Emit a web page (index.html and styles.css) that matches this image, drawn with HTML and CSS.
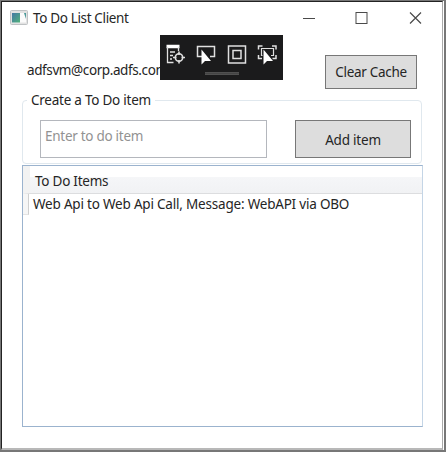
FILE: index.html
```html
<!DOCTYPE html>
<html lang="en">
<head>
<meta charset="utf-8">
<title>To Do List Client</title>
<link rel="stylesheet" href="styles.css">
</head>
<body>
<div class="frame">
<main class="window">
  <header class="titlebar">
    <svg class="app-icon" width="18" height="15" viewBox="0 0 18 15">
      <defs><linearGradient id="g" x1="0" y1="0" x2="1" y2="1"><stop offset="0" stop-color="#4478a5"/><stop offset="1" stop-color="#52b27c"/></linearGradient></defs>
      <rect x=".5" y=".5" width="17" height="14" rx="1" fill="#e2e2e2" stroke="#bfc2c4"/>
      <rect x="2" y="3" width="14" height="9.500" fill="#fbfbfb"/>
      <rect x="2" y="3" width="8" height="9.500" fill="url(#g)"/>
      <path d="M14 3h2v6z" fill="#4c9a9a"/>
    </svg>
    <h1 class="title">To Do List Client</h1>
    <svg class="controls" width="124" height="14" viewBox="0 0 124 14" fill="none" stroke="#4a4a4a">
      <path d="M0 7.500h12"/>
      <rect x="53" y="1.500" width="11" height="11"/>
      <path d="M107 1.500l11 11M118 1.500l-11 11" stroke-width="1.200"/>
    </svg>
  </header>
  <section class="account">
    <span class="user">adfsvm@corp.adfs.com</span>
    <button class="button clear">Clear Cache</button>
  </section>
  <fieldset class="group">
    <legend class="legend">Create a To Do item</legend>
    <div class="form">
      <input class="entry" placeholder="Enter to do item">
      <button class="button add">Add item</button>
    </div>
  </fieldset>
  <section class="list">
    <div class="list-head">To Do Items</div>
    <div class="row"><span class="gutter"></span>Web Api to Web Api Call, Message: WebAPI via OBO</div>
  </section>
</main>
</div>
<div class="debug-bar">
  <svg width="123" height="45" viewBox="0 0 123 45" fill="none" stroke="#e0e0e0" stroke-width="1.300">
    <path d="M6.500 11.500h13" stroke="#fff" stroke-width="3.500"/>
    <path d="M7.500 12v15.500h6M18.500 12v4M10 17h5M10 20.500h3M10 24h2"/>
    <circle cx="19" cy="22.500" r="3.700" stroke-width="1.600"/>
    <path d="M19 16.500v3.500M19 25v3.500M13 22.500h3.500M21.500 22.500H25" stroke-width="1.600"/>
    <path d="M42 21.500h-4.500v-10h17v10H50" stroke-width="1.500"/>
    <path d="M41.500 14.500v15l3.500-3.500h6z" fill="#fff" stroke="none"/>
    <rect x="68.500" y="11" width="17" height="17" stroke-width="1.500"/>
    <rect x="73" y="15.500" width="8" height="8" stroke-width="1.500"/>
    <path d="M98.500 14.500v-3.500h4M112 11h4v3.500M98.500 20v3.500h3.500M116 20v3.500h-3.500" stroke-width="1.500"/>
    <path d="M102.500 20.500h-1v-7h12v7H111" stroke-width="1.200"/>
    <path d="M103.500 14.500v15l3.500-3.500h6z" fill="#fff" stroke="none"/>
    <path d="M45 37.500h34M45 39.500h34" stroke="#505050" stroke-width="1"/>
    <path d="M45 38.500h34" stroke="#444" stroke-width="1"/>
  </svg>
</div>
</body>
</html>
```
FILE: styles.css
```css
* { box-sizing: border-box; }

body {
  margin: 0;
  height: 452px;
  overflow: hidden;
  font-family: "Noto Sans", "Open Sans", sans-serif;
  font-size: 13.5px;
  letter-spacing: -0.24px;
  color: #252525;
}

.frame {
  height: 452px;
  border: solid #777;
  border-width: 1px 2px 2px 1px;
  background: #fff;
  padding-right: 1px;
}

.window {
  height: 449px;
  border: solid #222;
  border-width: 1px 1px 2px 1px;
  border-right-color: #aaa;
  border-bottom-color: #b8b8b8;
}

.titlebar {
  display: flex;
  align-items: center;
  height: 32px;
  padding: 0 15px 0 8px;
}

.app-icon { margin-top: -1px; }

.title {
  margin: 1px auto 0 5px;
  font-size: 13.5px;
  font-weight: 400;
  line-height: 21px;
  letter-spacing: -0.35px;
}

.account {
  display: flex;
  justify-content: space-between;
  height: 64px;
  padding: 21px 25px 0 25px;
}

.user {
  margin-top: 5px;
  line-height: 20px;
  letter-spacing: -0.4px;
}

.button {
  padding: 0;
  border: 1px solid #777;
  background: #ddd;
  font: inherit;
  letter-spacing: inherit;
  color: #252525;
}

.clear {
  width: 92px;
  height: 34px;
  letter-spacing: -0.3px;
}

.group {
  margin: -7px 20px 0 20px;
  padding: 0;
  height: 73px;
  border: 1px solid #e0e8ee;
  border-radius: 4px;
}

.legend {
  height: 18px;
  margin-left: 4px;
  padding: 0 4px;
  line-height: 18px;
}

.form {
  display: flex;
  justify-content: space-between;
  padding: 11px 10px 0 17px;
}

.entry {
  width: 227px;
  height: 38px;
  border: 1px solid #b4b7bd;
  padding: 0 4px 7px;
  font: inherit;
  letter-spacing: -0.28px;
  background: #fff;
}

.entry::placeholder { color: #929292; }

.add {
  width: 116px;
  height: 38px;
  padding-top: 1px;
  letter-spacing: -0.2px;
}

.list {
  width: 401px;
  height: 262px;
  margin: 1px 0 0 20px;
  border: 1px solid #9bb3ce;
  border-right-color: #c4d5e6;
}

.list-head {
  height: 28px;
  padding: 5px 0 0 5px;
  border-left: 7px solid #f2f2f2;
  border-bottom: 1px solid #dcdddf;
  background: linear-gradient(#fff 0 40%, #f5f6f8 41%, #f1f2f4);
  line-height: 20px;
}

.row {
  display: flex;
  height: 21px;
  line-height: 21px;
  letter-spacing: -0.2px;
  white-space: nowrap;
}

.gutter {
  width: 6px;
  margin-right: 4px;
  border-right: 1px solid #d0d0d0;
  border-bottom: 1px solid #e4e4e4;
  background: #f6f6f6;
}

.debug-bar {
  position: absolute;
  left: 160px;
  top: 35px;
  width: 123px;
  height: 45px;
  background: #1b1b1c;
}
```
